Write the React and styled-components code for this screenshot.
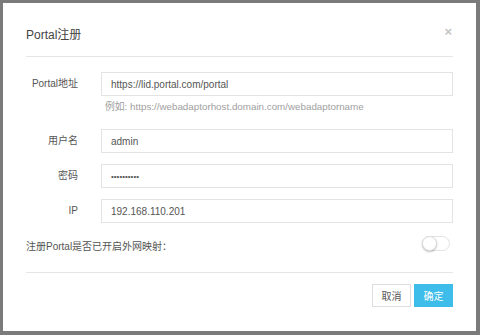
import React, { useState } from "react";
import styled, { createGlobalStyle } from "styled-components";

const GlobalStyle = createGlobalStyle`
    html, body {
        margin: 0;
        padding: 0;
        background: #7b7b7b;
    }
    body {
        font-family: "Liberation Sans", Arial, "Noto Sans CJK SC", sans-serif;
        font-size: 10px;
        color: #555;
    }
`;

const Page = styled.div`
    width: 480px;
    height: 335px;
    padding: 3px 4px 4px 3px;
    box-sizing: border-box;
`;

const Modal = styled.div`
    background: #fff;
    height: 100%;
    display: flex;
    flex-direction: column;
    padding: 0 23px;
    box-sizing: border-box;
`;

const Header = styled.div`
    display: flex;
    justify-content: space-between;
    align-items: flex-start;
    padding: 24px 0 13px;
    border-bottom: 1px solid #e6e6e6;
`;

const Title = styled.h4`
    margin: 0;
    font-size: 12px;
    line-height: 16px;
    font-weight: normal;
    color: #444;
`;

const Close = styled.button`
    border: none;
    background: none;
    padding: 0;
    margin: 0 1px 0 0;
    font-size: 13px;
    line-height: 10px;
    color: #c4c4c4;
    font-family: "Liberation Sans", Arial, sans-serif;
    font-weight: bold;
    cursor: pointer;
`;

const Body = styled.div`
    padding-top: 15px;
    flex: 1;
    border-bottom: 1px solid #e6e6e6;
`;

const Form = styled.div`
    display: grid;
    grid-template-columns: 52px 1fr;
    column-gap: 23px;
    row-gap: 11px;
`;

const Label = styled.label`
    text-align: right;
    line-height: 24px;
    color: #555;
    white-space: nowrap;
`;

const Field = styled.div`
    display: flex;
    flex-direction: column;
`;

const Input = styled.input`
    height: 24px;
    box-sizing: border-box;
    border: 1px solid #e3e3e3;
    padding: 0 9px;
    font-family: inherit;
    font-size: ${(p) => (p.type === "password" ? "8px" : "10px")};
    color: #555;
    outline: none;
    width: 100%;
    margin-right: 1px;
`;

const Help = styled.div`
    margin: 4px 0 4px 4px;
    line-height: 14px;
    font-size: 9.8px;
    color: #a0a0a0;
`;

const SwitchRow = styled.div`
    display: flex;
    justify-content: space-between;
    align-items: flex-start;
    margin-top: 13px;
    padding-right: 3px;
`;

const SwitchLabel = styled.span`
    padding-top: 4px;
    line-height: 14px;
    color: #555;
`;

const Track = styled.button`
    width: 28px;
    height: 15px;
    padding: 0;
    border-radius: 8px;
    border: 1px solid #e2e2e2;
    background: ${(p) => (p.$on ? "#3ebcea" : "#fff")};
    position: relative;
    cursor: pointer;
`;

const Knob = styled.span`
    position: absolute;
    top: -1px;
    left: ${(p) => (p.$on ? "12px" : "-1px")};
    width: 15px;
    height: 15px;
    border-radius: 50%;
    background: #fff;
    box-sizing: border-box;
    border: 1px solid #dcdcdc;
    box-shadow: 0 1px 2px rgba(0, 0, 0, 0.25);
`;

const Footer = styled.div`
    display: flex;
    justify-content: flex-end;
    gap: 3px;
    padding: 11px 0 24px;
`;

const Button = styled.button`
    width: 39px;
    height: 23px;
    padding: 0;
    font-family: inherit;
    font-size: 10px;
    border: 1px solid ${(p) => (p.$primary ? "#3ebcea" : "#dedede")};
    background: ${(p) => (p.$primary ? "#3ebcea" : "#fff")};
    color: ${(p) => (p.$primary ? "#fff" : "#555")};
    cursor: pointer;
`;

export default function App() {
    const [mapped, setMapped] = useState(false);

    return (
        <Page>
            <GlobalStyle />
            <Modal>
                <Header>
                    <Title>Portal注册</Title>
                    <Close>×</Close>
                </Header>
                <Body>
                    <Form>
                        <Label>Portal地址</Label>
                        <Field>
                            <Input defaultValue="https://lid.portal.com/portal" />
                            <Help>例如: https://webadaptorhost.domain.com/webadaptorname</Help>
                        </Field>
                        <Label>用户名</Label>
                        <Input defaultValue="admin" />
                        <Label>密码</Label>
                        <Input type="password" defaultValue="1234567890" />
                        <Label>IP</Label>
                        <Input defaultValue="192.168.110.201" />
                    </Form>
                    <SwitchRow>
                        <SwitchLabel>注册Portal是否已开启外网映射：</SwitchLabel>
                        <Track $on={mapped} onClick={() => setMapped(!mapped)}>
                            <Knob $on={mapped} />
                        </Track>
                    </SwitchRow>
                </Body>
                <Footer>
                    <Button>取消</Button>
                    <Button $primary>确定</Button>
                </Footer>
            </Modal>
        </Page>
    );
}
